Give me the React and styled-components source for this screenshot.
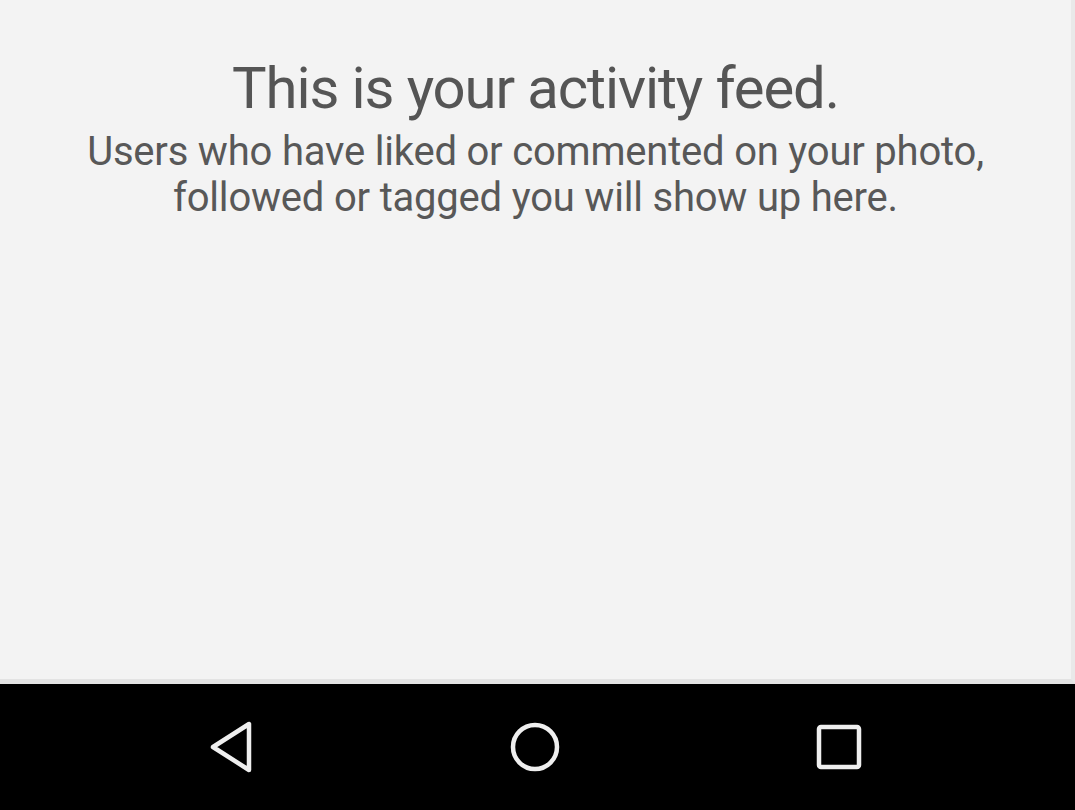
import styled, { createGlobalStyle } from "styled-components";

const Global = createGlobalStyle`
  html, body {
    margin: 0;
    padding: 0;
    background: #000;
  }
  #root {
    height: 810px;
  }
`;

const App = () => (
  <>
    <Global />
    <Screen>
      <Feed>
        <Title>This is your activity feed.</Title>
        <Subtitle>
          Users who have liked or commented on your photo,
          <br />
          followed or tagged you will show up here.
        </Subtitle>
      </Feed>
      <NavBar>
        <NavButton aria-label="Back">
          <svg width="46" height="52" viewBox="0 0 46 52">
            <path
              d="M41 3 L41 49 L5 26 Z"
              fill="none"
              stroke="#efefef"
              strokeWidth="4.5"
              strokeLinejoin="round"
            />
          </svg>
        </NavButton>
        <NavButton aria-label="Home">
          <svg width="52" height="52" viewBox="0 0 52 52">
            <circle cx="26" cy="26" r="22" fill="none" stroke="#efefef" strokeWidth="4.5" />
          </svg>
        </NavButton>
        <NavButton aria-label="Recents">
          <svg width="46" height="46" viewBox="0 0 46 46">
            <rect
              x="3"
              y="3"
              width="40"
              height="40"
              rx="2"
              fill="none"
              stroke="#efefef"
              strokeWidth="4.5"
            />
          </svg>
        </NavButton>
      </NavBar>
    </Screen>
  </>
);

const Screen = styled.div`
  width: 1075px;
  height: 810px;
  display: flex;
  flex-direction: column;
  font-family: Roboto, "Noto Sans", sans-serif;
`;

const Feed = styled.main`
  flex: 1;
  background: #f3f3f3;
  border-right: 4px solid #e9e9e9;
  border-bottom: 5px solid #e3e3e3;
  display: flex;
  flex-direction: column;
  align-items: center;
  padding-top: 53px;
  box-sizing: border-box;
`;

const Title = styled.h1`
  margin: 0;
  font-size: 58px;
  font-weight: 400;
  line-height: 70px;
  color: #555;
  letter-spacing: -1.1px;
`;

const Subtitle = styled.p`
  margin: 6px 0 0;
  font-size: 40px;
  font-weight: 400;
  line-height: 46px;
  color: #585858;
  text-align: center;
  letter-spacing: -0.2px;
`;

const NavBar = styled.nav`
  height: 126px;
  background: #000;
  display: grid;
  grid-template-columns: repeat(3, 1fr);
  align-items: center;
  padding: 0 84px 0 79px;
`;

const NavButton = styled.div`
  display: flex;
  justify-content: center;
  align-items: center;
`;

export default App;
